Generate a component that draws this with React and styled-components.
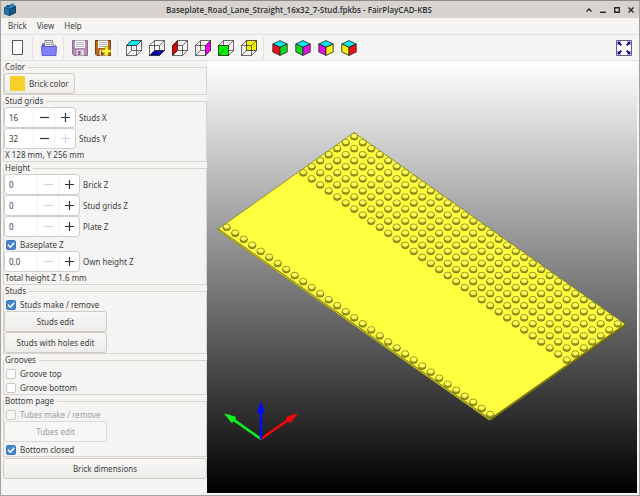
import { useState } from 'react';
import styled, { createGlobalStyle } from 'styled-components';

const STEP_X = 8.5;
const STEP_Y = 6.04;

// studs on both sides of the road: 7 rows behind it and 1 row in front
const studRows = [0, 1, 2, 3, 4, 5, 6, 15];
const studs = studRows.flatMap(row =>
  Array.from({ length: 32 }, (_, col) => ({
    x: 147.2 + (col - row) * STEP_X,
    y: 75.6 + (col + row) * STEP_Y,
  }))
);

const wireFaces = [
  { name: 'Top', fill: '#00f0f0', points: '0.5,5.5 5.5,0.5 15.5,0.5 10.5,5.5' },
  { name: 'Bottom', fill: '#0000b8', points: '0.5,15.5 5.5,10.5 15.5,10.5 10.5,15.5' },
  { name: 'Left', fill: '#e80000', points: '0.5,5.5 5.5,0.5 5.5,10.5 0.5,15.5' },
  { name: 'Right', fill: '#f000f0', points: '10.5,5.5 15.5,0.5 15.5,10.5 10.5,15.5' },
  { name: 'Front', fill: '#00f400', points: '0.5,5.5 10.5,5.5 10.5,15.5 0.5,15.5' },
  { name: 'Back', fill: '#f4f400', points: '5.5,0.5 15.5,0.5 15.5,10.5 5.5,10.5' },
];

const isoViews = [
  { name: 'Isometric front left', left: '#f01010', right: '#10d820' },
  { name: 'Isometric front right', left: '#10d820', right: '#e010e0' },
  { name: 'Isometric back right', left: '#e010e0', right: '#f8f010' },
  { name: 'Isometric back left', left: '#f8f010', right: '#f01010' },
];

const WireCube = ({ fill, points }) => (
  <Icon viewBox="0 0 16 16">
    <g fill="none" stroke="#2c2c2c" strokeWidth="0.7">
      <path d="M5.500 .5h10v10h-10z" />
      <polygon points={points} fill={fill} />
      <path d="M.5 5.500l5-5M10.500 5.500l5-5M.5 15.500l5-5M10.500 15.500l5-5" />
      <path d="M.5 5.500h10v10H.5z" />
    </g>
  </Icon>
);

const IsoCube = ({ left, right }) => (
  <Icon viewBox="0 0 16 16" stroke="#222" strokeWidth="0.8" strokeLinejoin="round">
    <path d="M8 .6L15.200 4 8 7.400.8 4z" fill="#10e4ec" />
    <path d="M.8 4L8 7.400v8L.8 12z" fill={left} />
    <path d="M15.200 4L8 7.400v8l7.200-3.400z" fill={right} />
  </Icon>
);

const NewIcon = () => (
  <Icon viewBox="0 0 16 16">
    <path d="M2.500 .5h10v14h-10z" fill="#fff" stroke="#555" />
  </Icon>
);

const OpenIcon = () => (
  <Icon viewBox="0 0 16 16">
    <path d="M1 3.500h3v3h9l1.500-2.500V15H1z" fill="#5858d8" />
    <path d="M4 .5h7.500l1 6h-9z" fill="#f4f4f8" stroke="#666" strokeWidth=".8" />
    <path d="M5 2.500h6M5 4.500h6" stroke="#888" strokeWidth=".8" />
    <path d="M.5 6.500h15l-.5 9H1z" fill="#8080fa" stroke="#5050c8" strokeWidth=".8" />
  </Icon>
);

const Floppy = ({ body, edge }) => (
  <>
    <path d="M.5 .5h15v15H2l-1.500-1.500z" fill={body} stroke={edge} />
    <path d="M3 .5h10v7.500H3z" fill="#f6f6f4" />
    <path d="M4 2.500h8M4 4.500h8M4 6.500h8" stroke="#aaa" strokeWidth=".8" />
    <path d="M4.500 10h7.500v5.500H4.500z" fill="#d8d8d8" />
    <path d="M6 11h2.500v4H6z" fill={edge} />
  </>
);

const SaveIcon = () => (
  <Icon viewBox="0 0 16 16">
    <Floppy body="#b48cb8" edge="#8c6c94" />
  </Icon>
);

const SaveAsIcon = () => (
  <Icon viewBox="0 0 16 16">
    <Floppy body="#b86820" edge="#70400c" />
    <path
      d="M10 6.500h3v3.200h3v2.900h-3V16h-3v-3.400H6.800V9.700H10z"
      fill="#fff838"
      stroke="#b09400"
      strokeWidth=".6"
    />
  </Icon>
);

const FitIcon = () => (
  <Icon viewBox="0 0 16 16">
    <path d="M.5 .5h15v15H.5z" fill="#fcfcff" stroke="#666680" />
    <path
      d="M1.500 1.500H5L4 2.500l2 2L4.500 6l-2-2-1 1zM14.500 1.500V5l-1-1-2 2L10 4.500l2-2-1-1zM1.500 14.500V11l1 1 2-2L6 11.500l-2 2 1 1zM14.500 14.500H11l1-1-2-2L11.500 10l2 2 1-1z"
      fill="#18108c"
    />
  </Icon>
);

const BrickLogo = () => (
  <Logo viewBox="0 0 12 13">
    <path d="M0 4.500L7 1.500l5 1.500v7l-6.500 3L0 11z" fill="#103a5c" />
    <path d="M.5 5L5 6.500V12L.5 10.500z" fill="#2478b4" />
    <path d="M5.600 6.500L11.500 4v5.500l-5.900 2.700z" fill="#1a5480" />
    <path d="M1 4.500l5.500-2.300 4.500 1L5.300 5.800z" fill="#3890cc" />
    <ellipse cx="4" cy="3.200" rx="1.800" ry="1.200" fill="#18507c" />
    <ellipse cx="8.500" cy="1.700" rx="2" ry="1.200" fill="#2c80b8" />
  </Logo>
);

const Stud = ({ x, y }) => (
  <g transform={`translate(${x} ${y})`}>
    <path d="M-3.600 -.5v1a3.600 2.900 0 0 0 7.200 0v-1z" fill="#a8a420" stroke="#625e0c" strokeWidth=".7" />
    <ellipse cy="-.7" rx="3.500" ry="2.600" fill="#ffff58" stroke="#75710f" strokeWidth=".7" />
  </g>
);

const Arrow = ({ color, angle, length }) => (
  <g transform={`translate(54 378) rotate(${angle})`} fill={color}>
    <path d={`M-1.300 0V${10 - length}h2.600V0z`} />
    <path d={`M0 ${-length}l3.700 11a3.700 1.800 0 0 1-7.400 0z`} />
  </g>
);

const Scene = () => (
  <SceneSvg viewBox="0 0 430 432" role="img" aria-label="Baseplate model">
    <path d="M11.500 167.800L283 357.800v2L11.500 169.800z" fill="#c8c22c" stroke="#7c7814" strokeWidth=".6" />
    <path d="M283 357.800L418 263v2L283 359.800z" fill="#807c14" stroke="#5c580c" strokeWidth=".6" />
    <path d="M147 71.500L418 263 283 357.800 11.500 167.800z" fill="#ffff40" stroke="#7c7814" strokeWidth=".7" />
    {studs.map(({ x, y }) => (
      <Stud key={`${x}-${y}`} x={x} y={y} />
    ))}
    <Arrow color="#10f020" angle={-55} length={45} />
    <Arrow color="#f00808" angle={55} length={45} />
    <Arrow color="#0808f8" angle={0} length={38} />
  </SceneSvg>
);

const SpinField = ({ id, label, initial, decimals = 0, max = 99, wide }) => {
  const [value, setValue] = useState(initial);
  const text = value.toFixed(decimals).replace('.', ',');

  return (
    <Row>
      <Spin $wide={wide}>
        <SpinInput
          id={id}
          value={text}
          onChange={e => setValue(Number(e.target.value.replace(',', '.')) || 0)}
        />
        <SpinButton
          aria-label={`Decrease ${label}`}
          disabled={value <= 0}
          onClick={() => setValue(value - 1)}
        >
          <Sign viewBox="0 0 9 9">
            <path d="M0 4.500h9" />
          </Sign>
        </SpinButton>
        <SpinButton
          aria-label={`Increase ${label}`}
          disabled={value >= max}
          onClick={() => setValue(value + 1)}
        >
          <Sign viewBox="0 0 9 9">
            <path d="M0 4.500h9M4.500 0v9" />
          </Sign>
        </SpinButton>
      </Spin>
      <label htmlFor={id}>{label}</label>
    </Row>
  );
};

const Check = ({ label, checked, disabled }) => (
  <CheckLabel $disabled={disabled}>
    <CheckBox type="checkbox" defaultChecked={checked} disabled={disabled} />
    <Tick viewBox="0 0 10 10">
      <path d="M2 4.800l2.300 2.400L8.200 2.800" />
    </Tick>
    {label}
  </CheckLabel>
);

const App = () => {
  return (
    <Window>
      <GlobalStyle />
      <TitleBar>
        <BrickLogo />
        <Title>Baseplate_Road_Lane_Straight_16x32_7-Stud.fpkbs - FairPlayCAD-KBS</Title>
        <WindowButtons>
          <WindowButton aria-label="Shade">
            <Glyph viewBox="0 0 6 6">
              <path d="M.5 4.500L3 2l2.500 2.500" />
            </Glyph>
          </WindowButton>
          <WindowButton aria-label="Minimize">
            <Glyph viewBox="0 0 6 6">
              <path d="M0 5.300h6" />
            </Glyph>
          </WindowButton>
          <WindowButton aria-label="Maximize">
            <Glyph viewBox="0 0 6 6">
              <path d="M.7 .7h4.600v4.600H.7z" />
            </Glyph>
          </WindowButton>
          <WindowButton aria-label="Close">
            <Glyph viewBox="0 0 6 6">
              <path d="M.5 .5l5 5M5.500 .5l-5 5" />
            </Glyph>
          </WindowButton>
        </WindowButtons>
      </TitleBar>

      <MenuBar>
        <MenuItem>Brick</MenuItem>
        <MenuItem>View</MenuItem>
        <MenuItem>Help</MenuItem>
      </MenuBar>

      <ToolBar>
        <ToolButton aria-label="New">
          <NewIcon />
        </ToolButton>
        <Separator />
        <ToolButton aria-label="Open">
          <OpenIcon />
        </ToolButton>
        <Separator />
        <ToolButton aria-label="Save">
          <SaveIcon />
        </ToolButton>
        <ToolButton aria-label="Save as">
          <SaveAsIcon />
        </ToolButton>
        <Separator />
        {wireFaces.map(({ name, fill, points }) => (
          <ToolButton key={name} aria-label={name}>
            <WireCube fill={fill} points={points} />
          </ToolButton>
        ))}
        <Separator />
        {isoViews.map(({ name, left, right }) => (
          <ToolButton key={name} aria-label={name}>
            <IsoCube left={left} right={right} />
          </ToolButton>
        ))}
        <Spacer />
        <ToolButton aria-label="Fit all">
          <FitIcon />
        </ToolButton>
      </ToolBar>

      <Main>
        <SideBar>
          <Group>
            <Legend>Color</Legend>
            <ColorButton>
              <Swatch />
              Brick color
            </ColorButton>
          </Group>

          <Group>
            <Legend>Stud grids</Legend>
            <SpinField id="studs-x" label="Studs X" initial={16} max={32} />
            <SpinField id="studs-y" label="Studs Y" initial={32} max={32} />
            <Info>X 128 mm, Y 256 mm</Info>
          </Group>

          <Group>
            <Legend>Height</Legend>
            <SpinField id="brick-z" label="Brick Z" initial={0} wide />
            <SpinField id="grids-z" label="Stud grids Z" initial={0} wide />
            <SpinField id="plate-z" label="Plate Z" initial={0} wide />
            <Check label="Baseplate Z" checked />
            <SpinField id="own-z" label="Own height Z" initial={0} decimals={1} wide />
            <Info>Total height Z 1.6 mm</Info>
          </Group>

          <Group>
            <Legend>Studs</Legend>
            <Check label="Studs make / remove" checked />
            <EditButton>Studs edit</EditButton>
            <EditButton>Studs with holes edit</EditButton>
          </Group>

          <Group>
            <Legend>Grooves</Legend>
            <Check label="Groove top" />
            <Check label="Groove bottom" />
          </Group>

          <Group>
            <Legend>Bottom page</Legend>
            <Check label="Tubes make / remove" disabled />
            <EditButton disabled>Tubes edit</EditButton>
            <Check label="Bottom closed" checked />
          </Group>

          <WideButton>Brick dimensions</WideButton>
        </SideBar>
        <Viewport>
          <Scene />
        </Viewport>
      </Main>
    </Window>
  );
};

export default App;

const GlobalStyle = createGlobalStyle`
  * {
    box-sizing: border-box;
  }
  body {
    margin: 0;
    background: #f5f4f2;
    color: #3a3e40;
    font-family: 'Noto Sans', sans-serif;
    font-size: 8px;
    line-height: 12px;
  }
  button, input {
    font: inherit;
    color: inherit;
    margin: 0;
  }
`;

const Window = styled.div`
  display: flex;
  flex-direction: column;
  min-height: 100vh;
  border: 1px solid #a5a3a0;
  border-top-color: #8e8a88;
`;
const TitleBar = styled.header`
  display: flex;
  align-items: center;
  height: 17px;
  padding: 0 1px 0 3px;
  background: #d7d4d0;
`;
const Logo = styled.svg`
  width: 12px;
  height: 13px;
`;
const Title = styled.h1`
  flex: 1;
  margin: 0;
  font-family: 'Open Sans', 'Noto Sans', sans-serif;
  font-size: 8px;
  font-weight: 600;
  text-align: center;
  white-space: nowrap;
  color: #2e3032;
`;
const WindowButtons = styled.div`
  display: flex;
`;
const WindowButton = styled.button`
  display: grid;
  place-items: center;
  width: 14px;
  height: 16px;
  padding: 0;
  border: 0;
  background: none;
`;
const Glyph = styled.svg`
  width: 6px;
  height: 6px;
  fill: none;
  stroke: #26282a;
  stroke-width: 1.4;
`;
const MenuBar = styled.nav`
  display: flex;
  height: 17px;
  padding: 0 2px;
  border-bottom: 1px solid #e3e1de;
`;
const MenuItem = styled.button`
  padding: 0 5px;
  border: 0;
  background: none;
`;
const ToolBar = styled.div`
  display: flex;
  align-items: center;
  height: 26px;
  padding: 0 4px 0 5px;
  border-bottom: 1px solid #e3e1de;
`;
const ToolButton = styled.button`
  display: grid;
  place-items: center;
  width: 23px;
  height: 23px;
  padding: 0;
  border: 0;
  background: none;
`;
const Icon = styled.svg`
  width: 16px;
  height: 16px;
`;
const Separator = styled.div`
  width: 1px;
  height: 22px;
  margin: 0 4px 0 3px;
  background: #e6e4e1;
`;
const Spacer = styled.div`
  flex: 1;
`;
const Main = styled.main`
  display: flex;
  flex: 1;
  padding: 0 2px 2px;
`;
const SideBar = styled.aside`
  display: flex;
  flex-direction: column;
  flex: 0 0 204px;
`;
const Group = styled.fieldset`
  min-width: 0;
  margin: 0;
  padding: 0;
  border: 1px solid #d8d5d1;
`;
const Legend = styled.legend`
  height: 12px;
  padding: 0 3px 0 1px;
`;
const Row = styled.div`
  display: flex;
  align-items: center;
  gap: 3px;
`;
const Spin = styled.div`
  display: flex;
  width: ${p => (p.$wide ? 76 : 72)}px;
  height: 21px;
  border: 1px solid #d2cfcb;
  border-radius: 3px;
  background: #fff;
`;
const SpinInput = styled.input`
  flex: 1;
  min-width: 0;
  padding: 0 4px;
  border: 0;
  outline: none;
  background: none;
`;
const SpinButton = styled.button`
  display: grid;
  place-items: center;
  width: 21px;
  padding: 0;
  border: 0;
  border-left: 1px solid #f3f2f0;
  background: none;
  color: ${p => (p.disabled ? '#d4d4d4' : '#303436')};
`;
const Sign = styled.svg`
  width: 9px;
  height: 9px;
  fill: none;
  stroke: currentColor;
  stroke-width: 1.2;
`;
const CheckLabel = styled.label`
  display: grid;
  grid-template-columns: 10px 1fr;
  align-items: center;
  column-gap: 4px;
  height: 14px;
  padding: 2px 0 0 2px;
  color: ${p => (p.$disabled ? '#9b9d9d' : 'inherit')};
`;
const CheckBox = styled.input`
  grid-area: 1 / 1;
  appearance: none;
  width: 10px;
  height: 10px;
  border: 1px solid #cdc9c5;
  border-radius: 2px;
  background: #fff;
  &:checked {
    border-color: #3a76b8;
    background: #4587cf;
  }
  &:disabled {
    background: #f8f8f7;
  }
`;
const Tick = styled.svg`
  grid-area: 1 / 1;
  width: 10px;
  height: 10px;
  fill: none;
  stroke: #fff;
  stroke-width: 1.5;
  pointer-events: none;
  visibility: hidden;
  input:checked + & {
    visibility: visible;
  }
`;
const Info = styled.p`
  margin: 0;
  padding-left: 1px;
`;
const PushButton = styled.button`
  display: flex;
  align-items: center;
  justify-content: center;
  height: 21px;
  padding: 0 5px;
  border: 1px solid #cfccc8;
  border-radius: 3px;
  background: linear-gradient(#f8f7f6, #efedeb);
  &:disabled {
    color: #9b9d9d;
    border-color: #dcd9d6;
    background: #f8f7f6;
  }
`;
const ColorButton = styled(PushButton)`
  gap: 4px;
`;
const Swatch = styled.span`
  width: 15px;
  height: 15px;
  background: #f8d02c;
`;
const EditButton = styled(PushButton)`
  width: 103px;
`;
const WideButton = styled(PushButton)`
  width: 100%;
  margin-top: 1px;
`;
const Viewport = styled.section`
  display: flex;
  flex: 1;
  min-width: 0;
  background: linear-gradient(#fff, #000);
`;
const SceneSvg = styled.svg`
  width: 100%;
  height: 100%;
`;
